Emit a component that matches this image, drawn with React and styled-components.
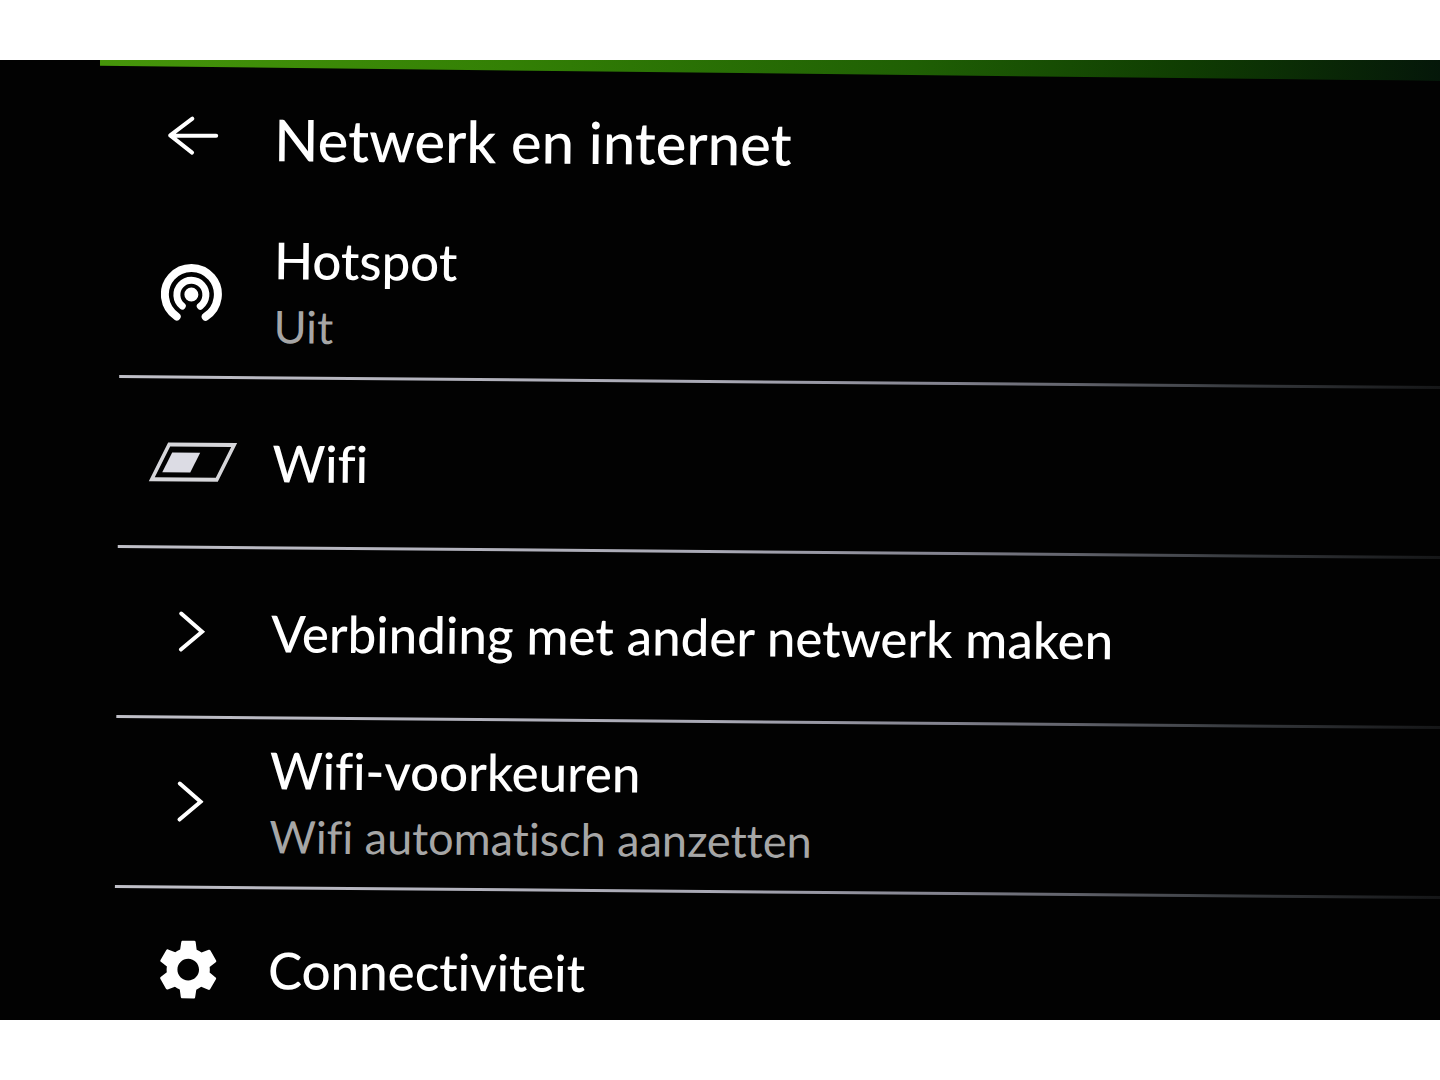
import React, { useState } from "react";
import styled, { createGlobalStyle } from "styled-components";
import { MdSettings } from "react-icons/md";

const GlobalStyle = createGlobalStyle`
  * {
    box-sizing: border-box;
  }
  body {
    margin: 0;
    background: #fff;
    font-family: Lato, "Open Sans", sans-serif;
    font-variant-ligatures: none;
  }
`;

const Page = styled.main`
  height: 100vh;
  padding: 60px 0;
`;

const Display = styled.div`
  height: 100%;
  overflow: hidden;
  background: #020202;
`;

// the display hangs a little crooked
const Screen = styled.div`
  transform: rotate(0.48deg);
  transform-origin: 0 0;
`;

const StatusBar = styled.div`
  height: 29px;
  margin: -20px -20px -4px 100px;
  background: linear-gradient(
    90deg,
    #46960a 0%,
    #338005 30%,
    #1f5f04 60%,
    #0f3c02 80%,
    #04140a 100%
  );
  clip-path: polygon(0 0, 100% 0, 100% 100%, 0 calc(100% - 4px));
`;

const IconCell = styled.span`
  display: flex;
  flex: none;
  align-items: center;
  justify-content: center;
  width: 148px;
  margin-right: 6px;
  color: #fff;
`;

const Header = styled.header`
  display: flex;
  align-items: center;
  height: 142px;
  margin-left: 121px;
  ${IconCell} {
    padding-bottom: 4px;
  }
  h1 {
    margin: 0;
    padding-top: 2px;
    color: #fff;
    font-size: 58px;
    font-weight: 500;
    line-height: 72px;
    white-space: nowrap;
  }
`;

const BackButton = styled.button`
  display: flex;
  padding: 0;
  border: 0;
  background: none;
  color: inherit;
  cursor: pointer;
`;

const List = styled.ul`
  margin: 0 -20px 0 122px;
  padding: 0;
  list-style: none;
`;

const Row = styled.a`
  display: flex;
  align-items: center;
  height: 167px;
  color: #fff;
  text-decoration: none;
  cursor: pointer;
`;

const Item = styled.li`
  border-bottom: 3px solid;
  border-image: linear-gradient(
      90deg,
      #c0c0c8 0%,
      #a8a8b4 45%,
      #82828e 62%,
      #3c3f44 82%,
      #121314 100%
    )
    1;
  &:last-child {
    border: 0;
  }
  &:last-child ${Row} {
    height: 162px;
  }
`;

const Texts = styled.span`
  display: flex;
  flex-direction: column;
  white-space: nowrap;
`;

const Title = styled.span`
  font-size: 51px;
  font-weight: 500;
  line-height: 66px;
`;

const Summary = styled.span`
  color: #a6a6a6;
  font-size: 45px;
  font-weight: 400;
  line-height: 66px;
`;

const Switch = styled.input`
  appearance: none;
  display: flex;
  align-items: center;
  width: 69px;
  height: 39px;
  margin: 0;
  padding: 0 5px;
  border: 4px solid #d6d6da;
  transform: skewX(-26deg);
  cursor: pointer;
  &::before {
    content: "";
    width: 28px;
    height: 20px;
    background: #dcdce4;
  }
  &:checked::before {
    margin-left: auto;
  }
`;

const ArrowIcon = () => (
  <svg
    width="54"
    height="42"
    fill="none"
    stroke="currentColor"
    strokeWidth="4"
    strokeLinecap="round"
    strokeLinejoin="round"
    aria-hidden="true"
  >
    <path d="M49 21H3M25 4 3 21l22 17" />
  </svg>
);

const ChevronIcon = () => (
  <svg
    width="28"
    height="44"
    fill="none"
    stroke="currentColor"
    strokeWidth="4"
    strokeLinecap="round"
    strokeLinejoin="miter"
    aria-hidden="true"
  >
    <path d="M4 3 25 21 4 39" />
  </svg>
);

const HotspotIcon = () => (
  <svg
    width="66"
    height="66"
    fill="none"
    stroke="currentColor"
    strokeLinecap="round"
    aria-hidden="true"
  >
    <path strokeWidth="8" d="M16 57A26.5 26.5 0 1 1 45 57" />
    <path strokeWidth="7" d="M21.5 46.5A14.5 14.5 0 1 1 39.5 46.5" />
    <circle cx="30.5" cy="35" r="7" fill="currentColor" stroke="none" />
  </svg>
);

const LinkItem = ({ icon, title, summary }) => (
  <Item>
    <Row href="#">
      <IconCell>{icon}</IconCell>
      <Texts>
        <Title>{title}</Title>
        {summary && <Summary>{summary}</Summary>}
      </Texts>
    </Row>
  </Item>
);

const SwitchItem = ({ id, title }) => {
  const [on, setOn] = useState(false);
  return (
    <Item>
      <Row as="label" htmlFor={id}>
        <IconCell>
          <Switch
            id={id}
            type="checkbox"
            role="switch"
            checked={on}
            onChange={(e) => setOn(e.target.checked)}
          />
        </IconCell>
        <Title>{title}</Title>
      </Row>
    </Item>
  );
};

const App = () => {
  return (
    <Page>
      <GlobalStyle />
      <Display>
        <Screen>
          <StatusBar />
          <Header>
            <IconCell>
              <BackButton type="button" aria-label="Terug">
                <ArrowIcon />
              </BackButton>
            </IconCell>
            <h1>Netwerk en internet</h1>
          </Header>
          <List>
            <LinkItem icon={<HotspotIcon />} title="Hotspot" summary="Uit" />
            <SwitchItem id="wifi" title="Wifi" />
            <LinkItem
              icon={<ChevronIcon />}
              title="Verbinding met ander netwerk maken"
            />
            <LinkItem
              icon={<ChevronIcon />}
              title="Wifi-voorkeuren"
              summary="Wifi automatisch aanzetten"
            />
            <LinkItem icon={<MdSettings size={72} />} title="Connectiviteit" />
          </List>
        </Screen>
      </Display>
    </Page>
  );
};

export default App;
